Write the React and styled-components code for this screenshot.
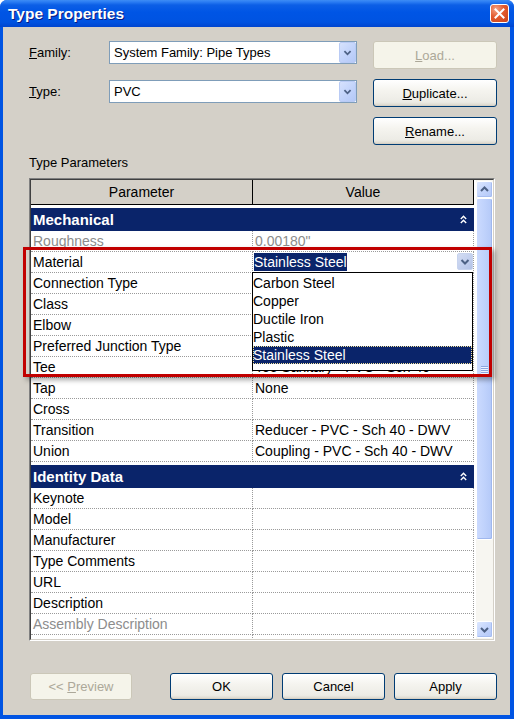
import React from "react";
import styled, { createGlobalStyle } from "styled-components";

const Global = createGlobalStyle`
  html, body { margin: 0; padding: 0; background: #ffffff; }
  body { font-family: "Liberation Sans", Arial, sans-serif; }
  * { box-sizing: border-box; }
`;

const Window = styled.div`
  width: 514px;
  height: 719px;
  display: flex;
  flex-direction: column;
  background: #0054e3;
  border-radius: 7px 7px 0 0;
  overflow: hidden;
`;

const TitleBar = styled.div`
  height: 27px;
  flex: none;
  display: flex;
  align-items: center;
  justify-content: space-between;
  padding: 0 5px 0 8px;
  background: linear-gradient(
    to bottom,
    #3d8df5 0px,
    #2a7cf3 2px,
    #0c5fe6 5px,
    #0055e5 12px,
    #0053e1 22px,
    #0045cf 27px
  );
`;

const TitleText = styled.div`
  color: #ffffff;
  font-family: "Liberation Sans", Arial, sans-serif;
  font-weight: bold;
  font-size: 15.5px;
  text-shadow: 1px 1px 0 #0a1a80;
`;

const CloseButton = styled.div`
  width: 19px;
  height: 19px;
  border: 1px solid #ffffff;
  border-radius: 3px;
  background: radial-gradient(circle at 30% 25%, #f4a487 0%, #e35a2e 45%, #c9421a 100%);
  display: flex;
  align-items: center;
  justify-content: center;
`;

const Body = styled.div`
  flex: 1;
  display: flex;
  flex-direction: column;
  margin: 0 4px 4px 3px;
  background: #d4d0c8;
  font-size: 13px;
  color: #000000;
`;

const Form = styled.div`
  display: grid;
  grid-template-columns: 64px 248px 124px;
  grid-template-rows: 28px 28px 28px;
  column-gap: 16px;
  row-gap: 10px;
  padding: 14px 0 0 26px;
`;

const FieldLabel = styled.div`
  grid-column: 1;
  grid-row: ${(p) => p.row};
  margin-top: ${(p) => p.offset || 0}px;
  height: 23px;
  line-height: 23px;
  font-size: 13px;
`;

const ComboBox = styled.div`
  grid-column: 2;
  grid-row: ${(p) => p.row};
  align-self: start;
  margin-top: ${(p) => p.offset || 0}px;
  height: 23px;
  border: 1px solid #7f9db9;
  background: #ffffff;
  display: flex;
  align-items: stretch;
  justify-content: space-between;
`;

const ComboText = styled.div`
  padding-left: 4px;
  line-height: 21px;
  font-size: 13px;
`;

const ComboButton = styled.div`
  width: 17px;
  border: 1px solid #b9cbf5;
  border-radius: 2px;
  background: linear-gradient(135deg, #d6e2fd 0%, #c3d4fb 50%, #b4c8f7 100%);
  display: flex;
  align-items: center;
  justify-content: center;
`;

const XPButton = styled.div`
  grid-column: 3;
  grid-row: ${(p) => p.row || "auto"};
  width: ${(p) => (p.w ? `${p.w}px` : "auto")};
  height: ${(p) => p.h || 28}px;
  border: 1px solid ${(p) => (p.disabled ? "#cbc7b8" : "#003c74")};
  border-radius: 3px;
  background: ${(p) =>
    p.disabled
      ? "#f5f4ea"
      : "linear-gradient(to bottom, #ffffff 0%, #f5f4ef 40%, #ecebe5 85%, #d8d4c8 100%)"};
  color: ${(p) => (p.disabled ? "#aca899" : "#000000")};
  font-size: 13px;
  display: flex;
  align-items: center;
  justify-content: center;
  box-shadow: ${(p) => (p.disabled ? "none" : "inset 0 -1px 0 #d6d0c5")};
`;

const SectionLabel = styled.div`
  margin: 10px 0 0 26px;
  height: 16px;
  line-height: 16px;
  font-size: 13px;
`;

const Table = styled.div`
  position: relative;
  margin: 7px 0 0 26px;
  width: 466px;
  height: 463px;
  border: 1px solid;
  border-color: #808080 #ffffff #ffffff #808080;
`;

const TableInner = styled.div`
  height: 100%;
  display: flex;
  background: #ffffff;
  border: 1px solid;
  border-color: #404040 #d4d0c8 #d4d0c8 #404040;
`;

const GridArea = styled.div`
  flex: 1;
  overflow: hidden;
  background: #ffffff;
`;

const HeaderRow = styled.div`
  display: grid;
  grid-template-columns: 222px 221px;
  height: 25px;
`;

const HeaderCell = styled.div`
  background: #d4d0c8;
  border-right: 1px solid #000000;
  border-bottom: 1px solid #000000;
  text-align: center;
  line-height: 24px;
  font-size: 14px;
`;

const CategoryRow = styled.div`
  margin-top: 3px;
  width: 443px;
  height: 23px;
  background: #0a246a;
  color: #ffffff;
  display: flex;
  align-items: center;
  justify-content: space-between;
  padding: 0 7px 0 2px;
  font-weight: bold;
  font-size: 15px;
`;

const Row = styled.div`
  display: grid;
  grid-template-columns: 222px 221px;
  height: 21px;
`;

const Cell = styled.div`
  position: relative;
  border-right: 1px dotted #9a9a9a;
  border-bottom: 1px dotted #9a9a9a;
  padding-left: 2px;
  line-height: 20px;
  font-size: 14px;
  color: ${(p) => (p.muted ? "#8c8c8c" : "#000000")};
  white-space: nowrap;
  overflow: ${(p) => (p.editor ? "visible" : "hidden")};
  display: ${(p) => (p.editor ? "flex" : "block")};
  justify-content: space-between;
  align-items: flex-start;
  ${(p) => (p.editor ? "padding-left: 1px; z-index: 2;" : "")}
`;

const Selection = styled.span`
  margin-top: 1px;
  height: 18px;
  line-height: 18px;
  background: #0a246a;
  color: #ffffff;
`;

const CellDropButton = styled.div`
  margin-top: 1px;
  width: 16px;
  height: 17px;
  border: 1px solid #c7d3ee;
  border-radius: 2px;
  background: linear-gradient(135deg, #d3dcf2 0%, #c2cfee 55%, #b3c2e6 100%);
  display: flex;
  align-items: center;
  justify-content: center;
`;

const DropList = styled.div`
  position: absolute;
  top: 20px;
  left: -1px;
  width: 221px;
  height: 99px;
  border: 1px solid #000000;
  background: #ffffff;
  padding-top: 1px;
  padding-bottom: 6px;
`;

const DropItem = styled.div`
  height: 18px;
  line-height: 18px;
  font-size: 14px;
  padding-left: 0;
  background: ${(p) => (p.selected ? "#0a246a" : "#ffffff")};
  color: ${(p) => (p.selected ? "#ffffff" : "#000000")};
  outline: ${(p) => (p.selected ? "1px dotted #f3e39a" : "none")};
  outline-offset: -1px;
`;

const ScrollBar = styled.div`
  width: 17px;
  flex: none;
  display: flex;
  flex-direction: column;
  padding: 1px 0;
  background: #f7f6f1;
`;

const ScrollButton = styled.div`
  height: 17px;
  flex: none;
  border: 1px solid #ffffff;
  border-radius: 2px;
  background: linear-gradient(135deg, #dbe6fe 0%, #c4d5fc 50%, #b2c7f8 100%);
  box-shadow: inset -1px -1px 0 #a7bdf0;
  display: flex;
  align-items: center;
  justify-content: center;
`;

const Thumb = styled.div`
  height: ${(p) => p.size}px;
  flex: none;
  border: 1px solid #ffffff;
  border-radius: 2px;
  background: linear-gradient(to right, #cbdafe 0%, #c1d3fc 45%, #b4c9f8 100%);
  box-shadow: inset -1px -1px 0 #9fb7ee;
  display: flex;
  align-items: center;
  justify-content: center;
`;

const Grip = styled.div`
  display: flex;
  flex-direction: column;
  gap: 1px;
`;

const GripLine = styled.div`
  width: 7px;
  height: 1px;
  background: #8ca6e0;
  box-shadow: 0 1px 0 #eef3ff;
`;

const Track = styled.div`
  flex: 1;
`;

const Highlight = styled.div`
  position: absolute;
  left: -7px;
  top: 68px;
  width: 469px;
  height: 130px;
  border: 3px solid #c10000;
  box-shadow: 3px 3px 5px rgba(0, 0, 0, 0.35);
  pointer-events: none;
  z-index: 5;
`;

const Footer = styled.div`
  margin-top: auto;
  display: flex;
  align-items: center;
  padding: 0 13px 15px 27px;
`;

const ButtonGroup = styled.div`
  margin-left: auto;
  display: flex;
  gap: 9px;
`;

const Chevron = ({ dir = "down", w = 17, h = 21, color = "#4d6185" }) => {
  const cx = w / 2;
  const cy = h / 2;
  const d =
    dir === "down"
      ? `M${cx - 3.5} ${cy - 1.5} L${cx} ${cy + 2} L${cx + 3.5} ${cy - 1.5}`
      : `M${cx - 3.5} ${cy + 1.5} L${cx} ${cy - 2} L${cx + 3.5} ${cy + 1.5}`;
  return (
    <svg width={w} height={h} viewBox={`0 0 ${w} ${h}`}>
      <path d={d} fill="none" stroke={color} strokeWidth="2" />
    </svg>
  );
};

const CollapseIcon = () => (
  <svg width="7" height="9" viewBox="0 0 7 9">
    <path d="M0.8 4 L3.5 1.3 L6.2 4" fill="none" stroke="#ffffff" strokeWidth="1.4" />
    <path d="M0.8 8 L3.5 5.3 L6.2 8" fill="none" stroke="#ffffff" strokeWidth="1.4" />
  </svg>
);

const mechanical = [
  { p: "Roughness", v: "0.00180\"", muted: true },
  { p: "Material", editor: true },
  { p: "Connection Type" },
  { p: "Class" },
  { p: "Elbow" },
  { p: "Preferred Junction Type" },
  { p: "Tee", v: "Tee Sanitary - PVC - Sch 40" },
  { p: "Tap", v: "None" },
  { p: "Cross" },
  { p: "Transition", v: "Reducer - PVC - Sch 40 - DWV" },
  { p: "Union", v: "Coupling - PVC - Sch 40 - DWV" },
];

const identity = [
  { p: "Keynote" },
  { p: "Model" },
  { p: "Manufacturer" },
  { p: "Type Comments" },
  { p: "URL" },
  { p: "Description" },
  { p: "Assembly Description", muted: true },
  { p: "Assembly Code" },
];

const materials = ["Carbon Steel", "Copper", "Ductile Iron", "Plastic", "Stainless Steel"];

const ParamRow = ({ item }) => (
  <Row>
    <Cell muted={item.muted}>{item.p}</Cell>
    {item.editor ? (
      <Cell editor>
        <Selection>Stainless Steel</Selection>
        <CellDropButton>
          <Chevron w={14} h={15} />
        </CellDropButton>
        <DropList>
          {materials.map((m) => (
            <DropItem key={m} selected={m === "Stainless Steel"}>
              {m}
            </DropItem>
          ))}
        </DropList>
      </Cell>
    ) : (
      <Cell muted={item.muted}>{item.v || ""}</Cell>
    )}
  </Row>
);

export default function App() {
  return (
    <>
      <Global />
      <Window>
        <TitleBar>
          <TitleText>Type Properties</TitleText>
          <CloseButton>
            <svg width="11" height="11" viewBox="0 0 11 11">
              <path d="M1.5 1.5 L9.5 9.5 M9.5 1.5 L1.5 9.5" stroke="#ffffff" strokeWidth="2" strokeLinecap="square" />
            </svg>
          </CloseButton>
        </TitleBar>
        <Body>
          <Form>
            <FieldLabel row={1}>
              <u>F</u>amily:
            </FieldLabel>
            <ComboBox row={1}>
              <ComboText>System Family: Pipe Types</ComboText>
              <ComboButton>
                <Chevron />
              </ComboButton>
            </ComboBox>
            <XPButton row={1} disabled>
              <u>L</u>oad...
            </XPButton>
            <FieldLabel row={2} offset={1}>
              <u>T</u>ype:
            </FieldLabel>
            <ComboBox row={2} offset={1}>
              <ComboText>PVC</ComboText>
              <ComboButton>
                <Chevron />
              </ComboButton>
            </ComboBox>
            <XPButton row={2}>
              <u>D</u>uplicate...
            </XPButton>
            <XPButton row={3}>
              <u>R</u>ename...
            </XPButton>
          </Form>
          <SectionLabel>Type Parameters</SectionLabel>
          <Table>
            <TableInner>
              <GridArea>
                <HeaderRow>
                  <HeaderCell>Parameter</HeaderCell>
                  <HeaderCell>Value</HeaderCell>
                </HeaderRow>
                <CategoryRow>
                  <span>Mechanical</span>
                  <CollapseIcon />
                </CategoryRow>
                {mechanical.map((it) => (
                  <ParamRow key={it.p} item={it} />
                ))}
                <CategoryRow>
                  <span>Identity Data</span>
                  <CollapseIcon />
                </CategoryRow>
                {identity.map((it) => (
                  <ParamRow key={it.p} item={it} />
                ))}
              </GridArea>
              <ScrollBar>
                <ScrollButton>
                  <Chevron dir="up" w={15} h={15} />
                </ScrollButton>
                <Thumb size={342}>
                  <Grip>
                    <GripLine />
                    <GripLine />
                    <GripLine />
                    <GripLine />
                  </Grip>
                </Thumb>
                <Track />
                <ScrollButton>
                  <Chevron dir="down" w={15} h={15} />
                </ScrollButton>
              </ScrollBar>
            </TableInner>
            <Highlight />
          </Table>
          <Footer>
            <XPButton w={102} h={27} disabled>
              &lt;&lt;&nbsp;<u>P</u>review
            </XPButton>
            <ButtonGroup>
              <XPButton w={103} h={27}>OK</XPButton>
              <XPButton w={103} h={27}>Cancel</XPButton>
              <XPButton w={103} h={27}>Apply</XPButton>
            </ButtonGroup>
          </Footer>
        </Body>
      </Window>
    </>
  );
}
